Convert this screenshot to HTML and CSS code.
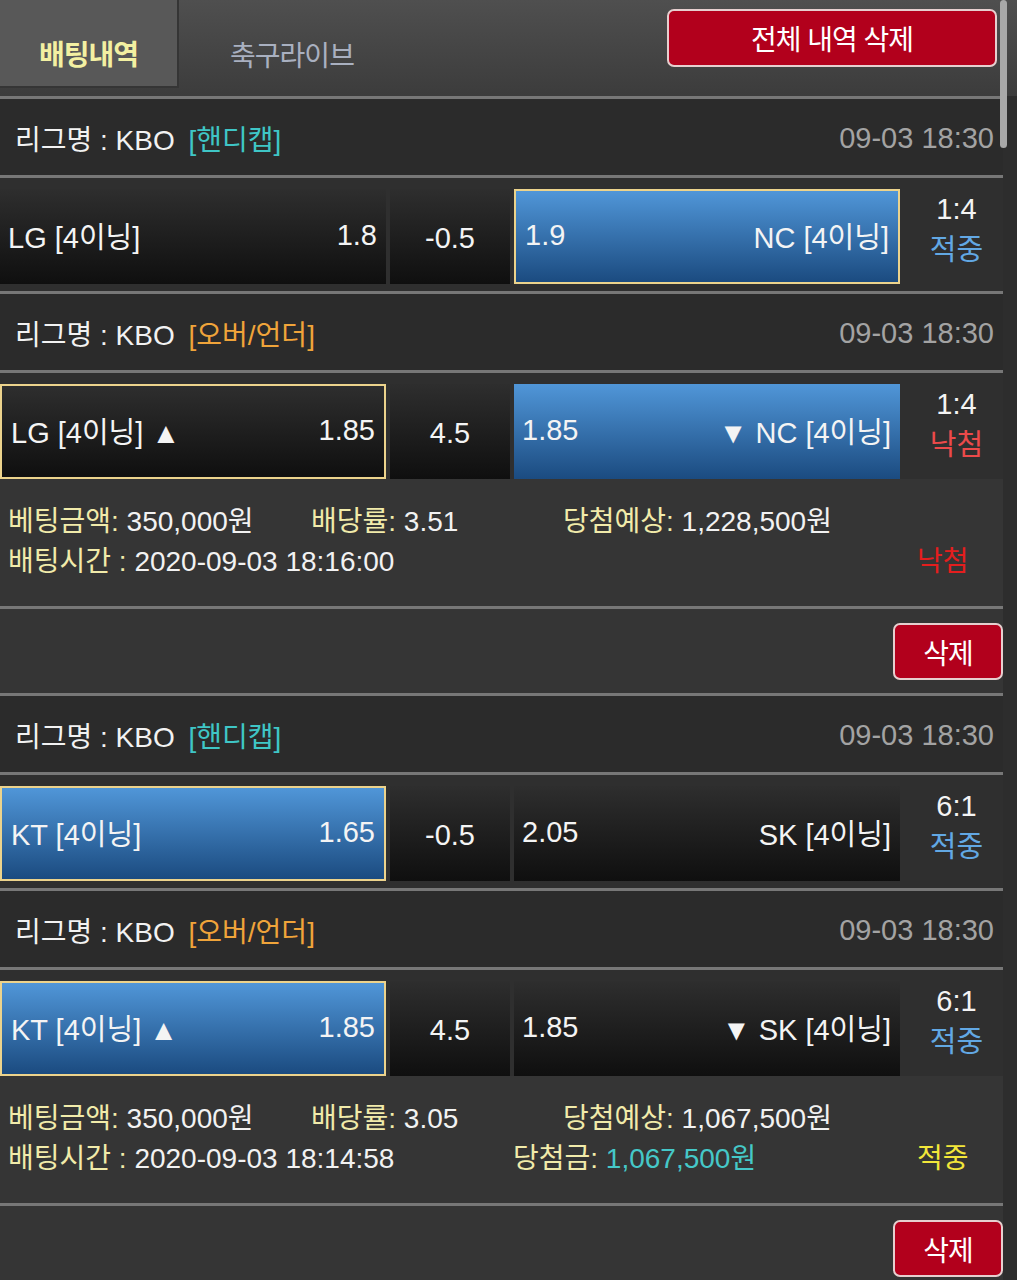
FILE: index.html
```html
<!DOCTYPE html>
<html lang="ko">
<head>
    <meta charset="UTF-8">
    <meta name="viewport" content="width=device-width, initial-scale=1.0">
    <title>배팅내역</title>
    <link rel="stylesheet" href="styles.css">
</head>
<body>
    <div class="topbar">
        <div class="tabs">
            <div class="tab active">배팅내역</div>
            <div class="tab">축구라이브</div>
        </div>
        <button class="btn-red btn-clear">전체 내역 삭제</button>
    </div>
    <div class="scrollbar"></div>

    <div class="list">
        <!-- 1 -->
        <div class="league">
            <span class="league-name">리그명 : KBO <span class="type handi">[핸디캡]</span></span>
            <span class="date">09-03 18:30</span>
        </div>
        <div class="bet-row">
            <div class="cell team"><span>LG [4이닝]</span><span>1.8</span></div>
            <div class="cell line">-0.5</div>
            <div class="cell team picked selected"><span>1.9</span><span>NC [4이닝]</span></div>
            <div class="score"><div>1:4</div><div class="hit">적중</div></div>
        </div>

        <div class="league">
            <span class="league-name">리그명 : KBO <span class="type over">[오버/언더]</span></span>
            <span class="date">09-03 18:30</span>
        </div>
        <div class="bet-row with-info">
            <div class="cell team selected"><span>LG [4이닝] ▲</span><span>1.85</span></div>
            <div class="cell line">4.5</div>
            <div class="cell team picked"><span>1.85</span><span>▼ NC [4이닝]</span></div>
            <div class="score"><div>1:4</div><div class="miss">낙첨</div></div>
        </div>
        <div class="info">
            <div class="info-line">
                <span class="c1"><span class="label">베팅금액:</span> 350,000원</span>
                <span class="c2"><span class="label">배당률:</span> 3.51</span>
                <span><span class="label">당첨예상:</span> 1,228,500원</span>
            </div>
            <div class="info-line">
                <span class="w1"><span class="label">배팅시간 :</span> 2020-09-03 18:16:00</span>
                <span class="w2"></span>
                <span class="result lose">낙첨</span>
            </div>
        </div>
        <div class="delete-row">
            <button class="btn-red btn-del">삭제</button>
        </div>

        <!-- 2 -->
        <div class="league">
            <span class="league-name">리그명 : KBO <span class="type handi">[핸디캡]</span></span>
            <span class="date">09-03 18:30</span>
        </div>
        <div class="bet-row">
            <div class="cell team picked selected"><span>KT [4이닝]</span><span>1.65</span></div>
            <div class="cell line">-0.5</div>
            <div class="cell team"><span>2.05</span><span>SK [4이닝]</span></div>
            <div class="score"><div>6:1</div><div class="hit">적중</div></div>
        </div>

        <div class="league">
            <span class="league-name">리그명 : KBO <span class="type over">[오버/언더]</span></span>
            <span class="date">09-03 18:30</span>
        </div>
        <div class="bet-row with-info">
            <div class="cell team picked selected"><span>KT [4이닝] ▲</span><span>1.85</span></div>
            <div class="cell line">4.5</div>
            <div class="cell team"><span>1.85</span><span>▼ SK [4이닝]</span></div>
            <div class="score"><div>6:1</div><div class="hit">적중</div></div>
        </div>
        <div class="info">
            <div class="info-line">
                <span class="c1"><span class="label">베팅금액:</span> 350,000원</span>
                <span class="c2"><span class="label">배당률:</span> 3.05</span>
                <span><span class="label">당첨예상:</span> 1,067,500원</span>
            </div>
            <div class="info-line">
                <span class="w1"><span class="label">배팅시간 :</span> 2020-09-03 18:14:58</span>
                <span class="w2"><span class="label">당첨금:</span> <span class="won">1,067,500원</span></span>
                <span class="result win">적중</span>
            </div>
        </div>
        <div class="delete-row">
            <button class="btn-red btn-del">삭제</button>
        </div>
    </div>
</body>
</html>
```

FILE: styles.css
```css
body {
    margin: 0;
    padding: 0;
    background-color: #2d2d2d;
    color: #f2f2f2;
    font-family: "Liberation Sans", "Noto Sans CJK KR", sans-serif;
    font-size: 28px;
}

.topbar {
    height: 96px;
    display: flex;
    justify-content: space-between;
    align-items: flex-start;
    background: linear-gradient(#4f4f4f, #3c3c3c);
}

.tabs {
    display: flex;
    height: 88px;
}

.tab {
    display: flex;
    align-items: center;
    justify-content: center;
    width: 226px;
    height: 88px;
    font-size: 28px;
    letter-spacing: -1px;
    color: #a9b0c0;
    padding-top: 20px;
    box-sizing: border-box;
}

.tab.active {
    width: 179px;
    background-color: #585858;
    border-right: 2px solid #353535;
    border-bottom: 2px solid #353535;
    color: #f3f0a2;
    font-weight: bold;
}

.btn-red {
    background-color: #b2001c;
    color: #fff;
    border: 2px solid #e6cfcf;
    border-radius: 7px;
    font-family: "Liberation Sans", "Noto Sans CJK KR", sans-serif;
    font-size: 28px;
    letter-spacing: -1px;
    cursor: pointer;
    padding: 0;
}

.btn-clear {
    width: 330px;
    height: 58px;
    margin-top: 9px;
    margin-right: 20px;
}

.scrollbar {
    position: absolute;
    top: 0;
    left: 1000px;
    width: 7px;
    height: 148px;
    border-radius: 4px;
    background-color: #a8a8a8;
}

.list {
    width: 1003px;
    background-color: #333;
}

.league,
.bet-row,
.delete-row {
    border-top: 3px solid #777;
}

.league {
    height: 74px;
    display: flex;
    align-items: center;
    justify-content: space-between;
    padding: 2px 9px 0 15px;
    background-color: #2b2b2b;
}

.type {
    margin-left: 6px;
}

.handi {
    color: #3fc6c6;
}

.over {
    color: #f0a43a;
}

.date {
    color: #a3a3a3;
    font-size: 29px;
}

.bet-row {
    display: flex;
    align-items: flex-start;
    gap: 4px;
    padding: 11px 0 7px;
    background-color: #2f2f2f;
}

.bet-row.with-info {
    padding-bottom: 0;
}

.cell {
    height: 95px;
    box-sizing: border-box;
    display: flex;
    align-items: center;
    padding-bottom: 3px;
    background: linear-gradient(#2e2e2e, #0f0f0f);
    font-size: 29px;
    color: #f4f4f4;
}

.team {
    width: 386px;
    justify-content: space-between;
    padding-left: 8px;
    padding-right: 9px;
}

.line {
    width: 120px;
    justify-content: center;
    padding-top: 6px;
}

.picked {
    background: linear-gradient(#5096d8, #1b4b80);
}

.selected {
    border: 2px solid #ecd38c;
    padding-left: 9px;
    padding-right: 9px;
}

.score {
    flex: 1;
    margin-left: -4px;
    padding-left: 10px;
    text-align: center;
    font-size: 29px;
    line-height: 41px;
    color: #f4f4f4;
}

.hit {
    color: #62a8e4;
}

.miss {
    color: #ec4a4a;
}

.info {
    height: 127px;
    box-sizing: border-box;
    padding: 20px 0 0 8px;
    background-color: #353535;
}

.info-line {
    display: flex;
    height: 40px;
    align-items: center;
}

.label {
    color: #f1ebaa;
}

.c1 {
    width: 303px;
}

.c2 {
    width: 252px;
}

.w1 {
    width: 505px;
}

.w2 {
    width: 404px;
}

.won {
    color: #45c8c8;
}

.lose {
    color: #e41e1e;
}

.win {
    color: #f2e63a;
}

.delete-row {
    display: flex;
    justify-content: flex-end;
    align-items: flex-start;
    padding-top: 14px;
    height: 70px;
    background-color: #353535;
}

.btn-del {
    width: 110px;
    height: 57px;
}
```
